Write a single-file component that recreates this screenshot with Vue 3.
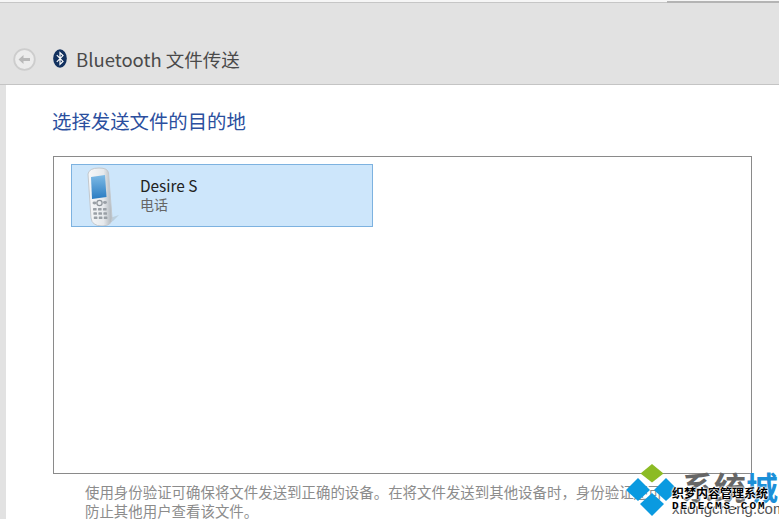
<script setup>
const title = 'Bluetooth 文件传送'
const heading = '选择发送文件的目的地'
const device = { name: 'Desire S', type: '电话' }
const noteLines = [
  '使用身份验证可确保将文件发送到正确的设备。在将文件发送到其他设备时，身份验证还可',
  '防止其他用户查看该文件。'
]
</script>

<template>
  <div class="window">
    <div class="top-edge"><div class="top-edge-right"></div></div>
    <header class="head">
      <svg class="back" width="23" height="23" viewBox="0 0 23 23">
        <circle cx="11.5" cy="11.5" r="10.3" fill="#ececec" stroke="#cdcdcd" stroke-width="1.8" />
        <path d="M5.5 11.5 L10.5 7 V10 H17 V13 H10.5 V16 Z" fill="#b9b9b9" />
      </svg>
      <svg class="bt" width="14" height="19" viewBox="0 0 14 19">
        <ellipse cx="7" cy="9.5" rx="6.8" ry="9.3" fill="#12315f" />
        <path d="M3.8 6.2 L10 12.4 L7 15.4 V3.6 L10 6.6 L3.8 12.8" fill="none" stroke="#fff" stroke-width="1.2" />
      </svg>
      <span class="head-title">{{ title }}</span>
    </header>
    <main class="body">
      <h1 class="heading">{{ heading }}</h1>
      <section class="list">
        <div class="item">
          <svg class="phone" width="40" height="60" viewBox="0 0 40 60">
            <defs>
              <linearGradient id="shell" x1="0" x2="1" y1="0" y2="0">
                <stop offset="0" stop-color="#f7f8f9" />
                <stop offset="0.65" stop-color="#e6e9ec" />
                <stop offset="1" stop-color="#aeb4ba" />
              </linearGradient>
              <linearGradient id="screen" x1="0" x2="0" y1="0" y2="1">
                <stop offset="0" stop-color="#7fbbe6" />
                <stop offset="1" stop-color="#2a7cc2" />
              </linearGradient>
            </defs>
            <path d="M25 52 L34 49 L28 55 L19 59 Z" fill="#b4c4d2" opacity="0.7" />
            <path d="M3 8 Q4 2 14 2 Q23 2 23.5 7 L27 52 Q27 60 17 60 Q7 60 6 52 Z" fill="url(#shell)" stroke="#c3c8cd" />
            <path d="M6 11 L20 9 L21.5 31 L7 33 Z" fill="url(#screen)" />
            <g fill="#9aa0a6">
              <ellipse cx="9.5" cy="37" rx="2" ry="1.4" />
              <circle cx="14.5" cy="37" r="2.6" fill="none" stroke="#8f959b" stroke-width="1.2" />
              <ellipse cx="20" cy="36.5" rx="2" ry="1.4" />
              <rect x="8" y="42" width="3.6" height="2.6" rx="0.6" />
              <rect x="13" y="42" width="3.6" height="2.6" rx="0.6" />
              <rect x="18" y="42" width="3.6" height="2.6" rx="0.6" />
              <rect x="8.4" y="46.2" width="3.6" height="2.6" rx="0.6" />
              <rect x="13.4" y="46.2" width="3.6" height="2.6" rx="0.6" />
              <rect x="18.4" y="46.2" width="3.6" height="2.6" rx="0.6" />
              <rect x="8.8" y="50.4" width="3.6" height="2.6" rx="0.6" />
              <rect x="13.8" y="50.4" width="3.6" height="2.6" rx="0.6" />
              <rect x="18.8" y="50.4" width="3.6" height="2.6" rx="0.6" />
            </g>
          </svg>
          <div class="item-text">
            <div class="item-name">{{ device.name }}</div>
            <div class="item-type">{{ device.type }}</div>
          </div>
        </div>
      </section>
      <p class="note">
        <span v-for="line in noteLines" :key="line" class="note-line">{{ line }}</span>
      </p>
    </main>
    <div class="mark">
      <svg class="mark-logo" width="52" height="52" viewBox="0 0 52 52">
        <path d="M26 0 L37.5 9.5 L26 18.5 L14.5 9.5 Z" fill="#8cbb24" />
        <path d="M12 14 L24 26 L12 37 L0 26 Z" fill="#0a9ae0" />
        <path d="M40 14 L52 26 L40 37 L28 26 Z" fill="#0a9ae0" />
        <path d="M26 29 L38 40 L26 52 L14 40 Z" fill="#0a9ae0" />
      </svg>
      <span class="mark-big"><span class="mark-gray">系统</span><span class="mark-blue">城</span></span>
      <span class="mark-sub">xitongcheng.com</span>
      <span class="mark-cn">织梦内容管理系统</span>
      <span class="mark-en">DEDECMS.COM</span>
    </div>
  </div>
</template>

<style scoped>
.window {
  position: relative;
  width: 779px;
  height: 519px;
  overflow: hidden;
  background: #e2e2e2;
  font-family: "Noto Sans CJK SC", "Open Sans", sans-serif;
}
.top-edge {
  position: relative;
  height: 2px;
  background: #f6f6f6;
  border-bottom: 1px solid #c6c6c6;
}
.top-edge-right {
  position: absolute;
  left: 667px;
  right: 0;
  top: 1px;
  height: 2px;
  background: #b4b4b4;
}
.head {
  height: 82px;
  box-sizing: border-box;
  padding: 45px 0 0 13px;
  display: flex;
  align-items: flex-start;
  border-bottom: 1px solid #c4c4c4;
}
.back {
  margin-right: 17px;
}
.bt {
  margin: 1px 9px 0 0;
}
.head-title {
  font-size: 18.5px;
  line-height: 22px;
  color: #4a4a4a;
}
.body {
  margin-left: 6px;
  height: 434px;
  box-sizing: border-box;
  background: #fff;
  padding: 22px 27px 0 47px;
}
.heading {
  margin: 0 0 0 -1px;
  font-size: 19.4px;
  line-height: 27px;
  font-weight: 400;
  color: #2b4f9e;
}
.list {
  margin-top: 22px;
  height: 318px;
  box-sizing: border-box;
  border: 1px solid #8a8a8a;
  padding: 7px 17px;
}
.item {
  width: 302px;
  height: 63px;
  box-sizing: border-box;
  background: #cde6fb;
  border: 1px solid #7db2e0;
  display: flex;
  align-items: center;
  padding-left: 13px;
}
.phone {
  flex: none;
}
.item-text {
  margin-left: 15px;
  padding-bottom: 4px;
}
.item-name {
  font-size: 15.4px;
  line-height: 20px;
  color: #222;
}
.item-type {
  font-size: 14px;
  line-height: 18px;
  color: #666;
}
.note {
  margin: 8px 0 0 32px;
  width: 690px;
  font-size: 14.45px;
  line-height: 19px;
  color: #8c8c8c;
}
.note-line {
  display: block;
  white-space: nowrap;
}
.mark {
  position: absolute;
  left: 625px;
  top: 463px;
  width: 154px;
  height: 56px;
}
.mark-logo {
  position: absolute;
  left: 1px;
  top: 1px;
}
.mark-big {
  position: absolute;
  left: 57px;
  top: 5px;
  font-size: 32px;
  line-height: 36px;
  font-weight: 700;
  white-space: nowrap;
}
.mark-gray {
  color: #666;
}
.mark-blue {
  color: #1b8fd8;
}
.mark-sub {
  position: absolute;
  left: 47px;
  top: 37px;
  font-family: "Liberation Sans", sans-serif;
  font-size: 15px;
  line-height: 18px;
  color: #555;
  white-space: nowrap;
}
.mark-cn {
  position: absolute;
  left: 47px;
  top: 22px;
  font-size: 12px;
  line-height: 15px;
  color: #000;
  font-weight: 700;
  white-space: nowrap;
  text-shadow: 0 0 2px #fff, 0 0 2px #fff, 0 0 2px #fff, 0 0 2px #fff;
}
.mark-en {
  position: absolute;
  left: 47px;
  top: 37px;
  font-family: "Liberation Mono", monospace;
  font-size: 11px;
  line-height: 12px;
  letter-spacing: 2px;
  font-weight: 700;
  color: #000;
  white-space: nowrap;
  text-shadow: 0 0 2px #fff, 0 0 2px #fff, 0 0 2px #fff, 0 0 2px #fff;
}
</style>
